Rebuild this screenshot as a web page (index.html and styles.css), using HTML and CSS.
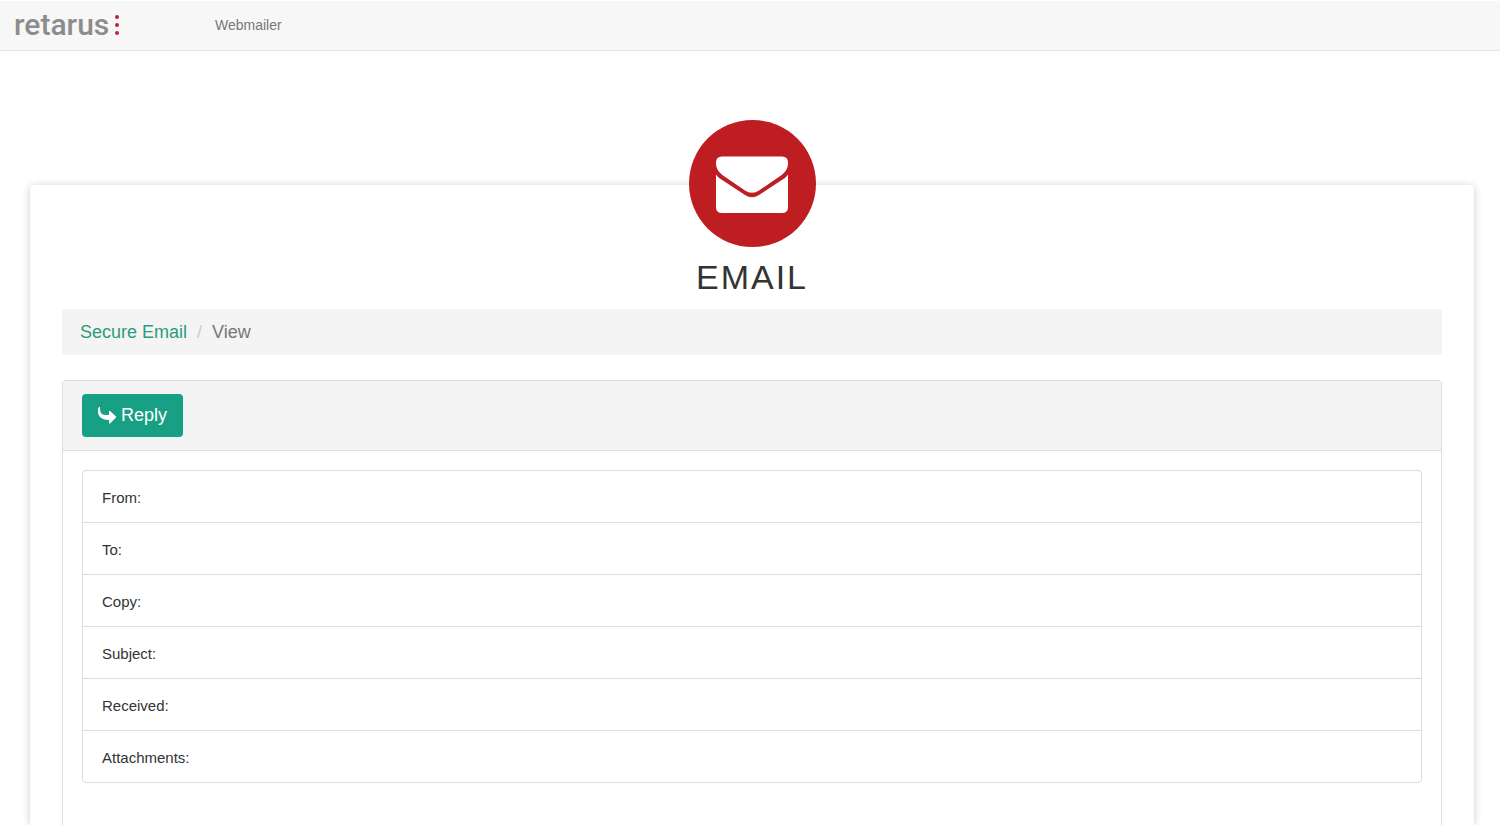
FILE: index.html
```html
<!DOCTYPE html>
<html lang="en">
<head>
    <meta charset="UTF-8">
    <title>Webmailer - Secure Email</title>
    <meta name="viewport" content="width=device-width, initial-scale=1.0">
    <link rel="stylesheet" href="styles.css">
</head>
<body>
    <nav class="navbar">
        <a class="navbar-brand" href="#">
            <span>retarus</span>
            <svg class="brand-dots" viewBox="0 0 4 20" aria-hidden="true">
                <circle cx="2" cy="2" r="2"/>
                <circle cx="2" cy="10" r="2"/>
                <circle cx="2" cy="18" r="2"/>
            </svg>
        </a>
        <a class="navbar-link" href="#">Webmailer</a>
    </nav>
    <main class="card">
        <header class="card-header">
            <svg class="mail-icon" viewBox="0 0 127 127" aria-hidden="true">
                <circle cx="63.5" cy="63.5" r="63.5" fill="#be1e21"/>
                <path fill="#fff" d="M33 36.500h60q6 0 6 6v1c0 5-3 9-7 12L70 70.500q-7 4.500-14 0L34 55.500c-4-3-7-7-7-12v-1q0-6 6-6z"/>
                <path fill="#fff" d="M27 54.500c2 3 4 4 7 6l22 14.500q7 4.500 14 0l22-14.500c3-2 5-3 7-6V87q0 6-6 6H33q-6 0-6-6z"/>
            </svg>
            <h1>EMAIL</h1>
        </header>
        <ol class="breadcrumb">
            <li><a href="#">Secure Email</a></li>
            <li class="active">View</li>
        </ol>
        <section class="panel">
            <div class="panel-heading">
                <button type="button" class="btn">
                    <svg class="reply-icon" viewBox="0 0 18 17" aria-hidden="true">
                        <path d="M1 0C-1 3-.5 7 2 10c2 2 5 3 9 3v3.500h1L18 10.500v-1L12 4h-1v4C7 8 4 8 3 6 2 4 2 2 2 0z"/>
                    </svg>
                    Reply
                </button>
            </div>
            <div class="panel-body">
                <ul class="list-group">
                    <li>From:</li>
                    <li>To:</li>
                    <li>Copy:</li>
                    <li>Subject:</li>
                    <li>Received:</li>
                    <li>Attachments:</li>
                </ul>
            </div>
        </section>
    </main>
</body>
</html>
```

FILE: styles.css
```css
* {
    box-sizing: border-box;
}
body {
    margin: 0;
    min-height: 100vh;
    display: flex;
    flex-direction: column;
    font-family: "Liberation Sans", Arial, sans-serif;
    background: #fff;
    color: #333;
}
a {
    color: #2b9d7c;
    text-decoration: none;
}
.navbar {
    display: flex;
    align-items: center;
    height: 51px;
    padding: 0 14px 2px;
    background: #f7f7f7;
    border-top: 1px solid #fff;
    border-bottom: 1px solid #e4e4e4;
}
.navbar-brand {
    display: flex;
    align-items: center;
    gap: 6px;
    width: 201px;
    font-family: Roboto, sans-serif;
    font-size: 30px;
    font-weight: 500;
    line-height: 47px;
    color: #8c8c8c;
}
.brand-dots {
    width: 4px;
    height: 20px;
    fill: #c4203f;
}
.navbar-link {
    font-size: 14px;
    color: #777;
}
/* Card runs down to the bottom of the window */
.card {
    flex: 1;
    display: flex;
    flex-direction: column;
    margin: 134px 26px 0 30px;
    padding: 0 32px;
    background: #fff;
    border-radius: 4px 4px 0 0;
    box-shadow: 0 1px 8px rgba(0, 0, 0, 0.2);
}
.card-header {
    display: flex;
    flex-direction: column;
    align-items: center;
    margin-top: -65px;
}
.mail-icon {
    width: 127px;
    height: 127px;
}
h1 {
    margin: 10px 0 12px;
    font-size: 34px;
    font-weight: normal;
    line-height: 40px;
    letter-spacing: 2px;
}
.breadcrumb {
    display: flex;
    margin: 0 0 25px;
    padding: 10px 18px;
    list-style: none;
    font-size: 18px;
    line-height: 26px;
    background: #f4f4f4;
    border-radius: 4px;
}
.breadcrumb .active {
    color: #777;
}
.breadcrumb .active::before {
    content: "/";
    padding: 0 10px;
    color: #ccc;
}
.panel {
    flex: 1;
    border: 1px solid #ddd;
    border-bottom: 0;
    border-radius: 4px 4px 0 0;
}
.panel-heading {
    padding: 13px 19px;
    background: #f4f4f4;
    border-bottom: 1px solid #ddd;
}
.btn {
    display: flex;
    align-items: center;
    gap: 5px;
    height: 43px;
    padding: 0 16px;
    font-family: inherit;
    font-size: 18px;
    color: #fff;
    background: #18a085;
    border: none;
    border-radius: 4px;
    cursor: pointer;
}
.btn:hover {
    background: #138871;
}
.reply-icon {
    width: 18px;
    height: 17px;
    fill: #fff;
}
.panel-body {
    padding: 19px;
}
.list-group {
    margin: 0;
    padding: 0;
    list-style: none;
    font-size: 15px;
    border: 1px solid #ddd;
    border-radius: 4px;
}
.list-group li {
    padding: 17px 19px 14px;
    line-height: 20px;
}
.list-group li + li {
    border-top: 1px solid #ddd;
}
```
